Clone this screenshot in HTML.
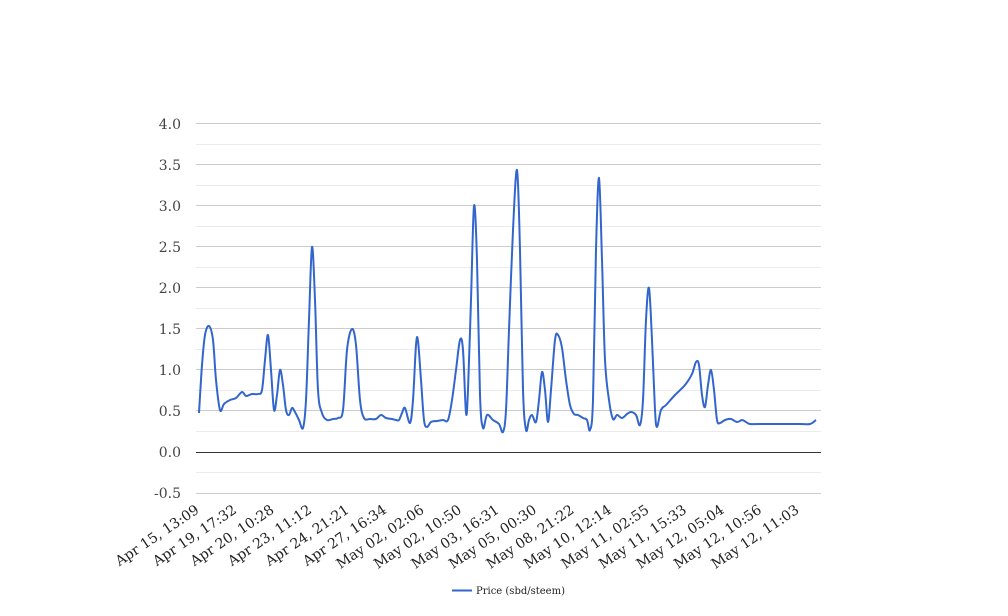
<!DOCTYPE html>
<html><head><meta charset="utf-8"><style>html,body{margin:0;padding:0;background:#fff;width:1008px;height:616px;overflow:hidden}</style></head>
<body>
<svg width="1008" height="616" xmlns="http://www.w3.org/2000/svg" font-family="'DejaVu Serif','Liberation Serif',serif">
<g stroke="#ebebeb" stroke-width="1">
<line x1="196" x2="821" y1="144.5" y2="144.5"/><line x1="196" x2="821" y1="185.5" y2="185.5"/>
<line x1="196" x2="821" y1="226.5" y2="226.5"/><line x1="196" x2="821" y1="267.5" y2="267.5"/>
<line x1="196" x2="821" y1="308.5" y2="308.5"/><line x1="196" x2="821" y1="349.5" y2="349.5"/>
<line x1="196" x2="821" y1="390.5" y2="390.5"/><line x1="196" x2="821" y1="431.5" y2="431.5"/>
<line x1="196" x2="821" y1="472.5" y2="472.5"/>
</g>
<g stroke="#cccccc" stroke-width="1">
<line x1="196" x2="821" y1="123.5" y2="123.5"/><line x1="196" x2="821" y1="164.5" y2="164.5"/>
<line x1="196" x2="821" y1="205.5" y2="205.5"/><line x1="196" x2="821" y1="246.5" y2="246.5"/>
<line x1="196" x2="821" y1="287.5" y2="287.5"/><line x1="196" x2="821" y1="328.5" y2="328.5"/>
<line x1="196" x2="821" y1="369.5" y2="369.5"/><line x1="196" x2="821" y1="410.5" y2="410.5"/>
<line x1="196" x2="821" y1="493.5" y2="493.5"/>
</g>
<line x1="196" x2="821" y1="452.5" y2="452.5" stroke="#333" stroke-width="1"/>
<g font-size="14" fill="#444" text-anchor="end">
<text x="181" y="129">4.0</text><text x="181" y="170">3.5</text><text x="181" y="211">3.0</text>
<text x="181" y="252">2.5</text><text x="181" y="293">2.0</text><text x="181" y="334">1.5</text>
<text x="181" y="375">1.0</text><text x="181" y="416">0.5</text><text x="181" y="457">0.0</text>
<text x="181" y="498">-0.5</text>
</g>
<g font-size="14" fill="#222" text-anchor="end">
<text transform="translate(200,512) rotate(-34)">Apr 15, 13:09</text>
<text transform="translate(237.5,512) rotate(-34)">Apr 19, 17:32</text>
<text transform="translate(275,512) rotate(-34)">Apr 20, 10:28</text>
<text transform="translate(312.5,512) rotate(-34)">Apr 23, 11:12</text>
<text transform="translate(350,512) rotate(-34)">Apr 24, 21:21</text>
<text transform="translate(387.5,512) rotate(-34)">Apr 27, 16:34</text>
<text transform="translate(425,512) rotate(-34)">May 02, 02:06</text>
<text transform="translate(462.5,512) rotate(-34)">May 02, 10:50</text>
<text transform="translate(500,512) rotate(-34)">May 03, 16:31</text>
<text transform="translate(537.5,512) rotate(-34)">May 05, 00:30</text>
<text transform="translate(575,512) rotate(-34)">May 08, 21:22</text>
<text transform="translate(612.5,512) rotate(-34)">May 10, 12:14</text>
<text transform="translate(650,512) rotate(-34)">May 11, 02:55</text>
<text transform="translate(687.5,512) rotate(-34)">May 11, 15:33</text>
<text transform="translate(725,512) rotate(-34)">May 12, 05:04</text>
<text transform="translate(762.5,512) rotate(-34)">May 12, 10:56</text>
<text transform="translate(800,512) rotate(-34)">May 12, 11:03</text>
</g>
<polyline id="pl" fill="none" stroke="#3366cc" stroke-width="2" stroke-linejoin="round" stroke-linecap="round" points="199,413 202,365 205,335 209,326 213,340 216,380 220,410 224,404 230,400 236,398 242,392 246,396 252,394 258,394 262,390 265,360 268,335 271,370 274,410 277,395 280,370 283,385 286,410 289,415 292,408 295,412 299,420 303,428 306,400 309,320 312,247 315,300 318,390 322,413 327,420 333,419 338,418 343,410 347,350 352,329 356,345 360,400 364,418 370,419 376,419 381,415 386,418 392,419 396,420 399,420 402,413 405,408 410,423 413,400 416,345 418,341 421,380 424,420 427,427 431,422 437,421 443,420 448,420 452,400 456,370 460,340 463,350 466,413 468,390 471,300 474,206 477,260 480,395 483,428 487,415 493,420 499,424 503,432 506,410 509,330 513,230 517,170 520,250 523,390 526,430 529,420 532,415 536,422 539,400 542,372 545,390 548,422 551,390 555,340 558,335 562,348 566,380 570,405 574,414 578,415 583,418 587,420 590,430 593,400 596,250 599,178 602,260 605,360 609,400 613,419 617,415 622,418 627,414 631,412 636,415 640,425 643,400 646,320 649,288 652,340 655,410 657,427 661,410 666,405 675,395 685,385 692,374 696,362 699,365 702,395 705,407 708,385 711,370 714,390 717,420 720,423 725,420 731,419 737,422 742,420 746,422 750,424 760,424 800,424 810,424 816,420"/>
<line x1="452" x2="472" y1="590.5" y2="590.5" stroke="#3366cc" stroke-width="2"/>
<text x="476" y="594" font-size="10" fill="#222">Price (sbd/steem)</text>
</svg>
<script>
(function(){
var pl=document.getElementById('pl');
var p=pl.getAttribute('points').trim().split(/\s+/).map(function(s){return s.split(',').map(Number)});
var d='M'+p[0][0]+','+p[0][1];
for(var i=0;i<p.length-1;i++){
var p0=p[i-1]||p[i],p1=p[i],p2=p[i+1],p3=p[i+2]||p2,t=6;
var c1x=p1[0]+(p2[0]-p0[0])/t,c1y=p1[1]+(p2[1]-p0[1])/t;
var c2x=p2[0]-(p3[0]-p1[0])/t,c2y=p2[1]-(p3[1]-p1[1])/t;
d+=' C'+c1x.toFixed(2)+','+c1y.toFixed(2)+' '+c2x.toFixed(2)+','+c2y.toFixed(2)+' '+p2[0]+','+p2[1];
}
var ns='http://www.w3.org/2000/svg',path=document.createElementNS(ns,'path');
path.setAttribute('d',d);path.setAttribute('fill','none');path.setAttribute('stroke','#3366cc');
path.setAttribute('stroke-width','2');path.setAttribute('stroke-linejoin','round');
pl.parentNode.replaceChild(path,pl);
})();
</script>
</body></html>
